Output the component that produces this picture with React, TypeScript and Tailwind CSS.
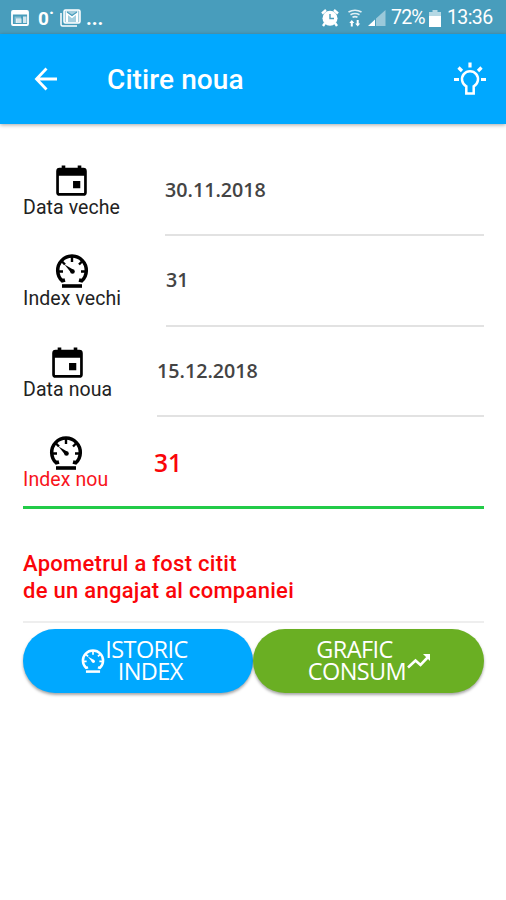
import type { ReactNode } from "react";
import clsx from "clsx";

type IconProps = { className?: string };

function CalendarIcon({ className }: IconProps) {
  return (
    <svg viewBox="0 0 30 30" className={className} fill="none">
      <rect x="1.5" y="4" width="27" height="24.5" rx="2" stroke="currentColor" strokeWidth="2.6" />
      <path d="M1 4h28v6.500H1zM5.500 .5h3.500V5H5.500zM21 .5h3.500V5H21zM16.500 15.500h7v7h-7z" fill="currentColor" />
    </svg>
  );
}

function GaugeIcon({ className }: IconProps) {
  return (
    <svg viewBox="0 0 34 34" className={className} fill="none" stroke="currentColor">
      <path d="M10 26L7.200 26.800A14.300 14.300 0 1 1 26.800 26.800L24 26" strokeWidth="3.500" />
      <path d="M17 3v5M31 17.500h-5M3 17.500h5M7 7.500l3 3M27 7.500l-3 3" strokeWidth="2.400" />
      <path d="M9.500 10.500l9 5.200-2.600 2.800z" fill="currentColor" stroke="none" />
      <circle cx="17.500" cy="17.500" r="2.300" fill="currentColor" stroke="none" />
      <path d="M7 32h20" strokeWidth="3.600" />
    </svg>
  );
}

function BulbIcon() {
  return (
    <svg viewBox="0 0 34 34" className="h-[34px] w-[34px]" fill="none" stroke="currentColor" strokeWidth="2.5">
      <path d="M13.300 31.500v-7.200a8 8 0 1 1 7.400 0v7.200z" />
      <path d="M17 .5v5M1 17.500h5M28 17.500h5M5.500 5.500l3.500 3.500M28.500 5.500L25 9" strokeWidth="3.200" />
    </svg>
  );
}

function StatusBar() {
  return (
    <div className="flex h-[34px] items-center bg-[#489dbc] pt-[2px] pr-[12px] pl-[11px] font-[Roboto] text-white">
      <svg viewBox="0 0 18 16" className="h-4 w-[18px]" fill="none">
        <rect x="1" y="1" width="16" height="14" rx="1" stroke="currentColor" strokeWidth="1.800" />
        <path d="M1 1h16v3.500H1z" fill="currentColor" />
        <path d="M3.500 6.500H10V9H6v4H3.500z" fill="currentColor" opacity=".35" />
        <path d="M5 8.500h5.500V13H5zM12 6.500h3.500V13H12z" fill="currentColor" opacity=".75" />
      </svg>
      <span className="ml-[9px] w-[17px] text-[19px] leading-none font-bold">0˙</span>
      <svg viewBox="0 0 21 18" className="ml-[5px] h-[18px] w-[21px]" fill="none" stroke="currentColor">
        <path d="M1 4v11.500q0 1.500 1.500 1.500H17" strokeWidth="1.500" />
        <rect x="4" y="1" width="16" height="13" rx="1.500" fill="currentColor" fillOpacity=".5" strokeWidth="1.500" />
        <path d="M7 13V4l5 4 5-4v9" strokeWidth="2" />
        <path d="M7 3l5 3.500L17 3" stroke="#489dbc" strokeWidth="1.200" />
      </svg>
      <span className="ml-[5px] text-[20px] leading-none font-bold">...</span>

      <svg viewBox="0 0 18 18" className="ml-auto h-[18px] w-[18px]" fill="none">
        <circle cx="9" cy="9.300" r="7.500" fill="currentColor" />
        <path d="M1 4.500l4-3.500M17 4.500l-4-3.500M4 14l-2 3M14 14l2 3" stroke="currentColor" strokeWidth="2.400" />
        <path d="M9 5V9.500h4" stroke="#489dbc" strokeWidth="1.400" />
      </svg>
      <svg viewBox="0 0 14 18" className="ml-[9px] h-[18px] w-[14px]" fill="none" stroke="currentColor">
        <path d="M.5 3q6.500-3.500 13 0M2.500 5.800q4.500-2.600 9 0M4.500 8.300q2.500-1.300 5 0" strokeWidth="1.600" opacity=".85" />
        <path d="M3.800 17.500v-5M9.700 11v5" strokeWidth="2" />
        <path d="M1.300 14l2.500-3 2.500 3zM7.200 14.500l2.500 3 2.500-3z" fill="currentColor" stroke="none" />
      </svg>
      <svg viewBox="0 0 18 18" className="ml-[6px] h-[18px] w-[18px]" fill="currentColor">
        <path d="M0 17h7V10.500z" />
        <path d="M8 17V9.500L17.500 1v16z" opacity=".45" />
      </svg>
      <span className="ml-[5px] w-[35px] text-[19.500px] leading-none tracking-[-0.800px]">72%</span>
      <svg viewBox="0 0 12 17" className="ml-[3px] h-[17px] w-3" fill="currentColor">
        <path d="M3.500 0h5v2h-5z" opacity=".6" />
        <path d="M0 2h12v4H0z" opacity=".6" />
        <path d="M0 6h12v11H0z" />
      </svg>
      <span className="ml-[6px] w-[47px] text-[19.500px] leading-none tracking-[-0.600px]">13:36</span>
    </div>
  );
}

type ReadingRowProps = {
  icon: ReactNode;
  label: string;
  value: string;
  labelWidth: string;
  active?: boolean;
};

function ReadingRow({ icon, label, value, labelWidth, active }: ReadingRowProps) {
  return (
    <li className={clsx("flex", active ? "h-[91.750px] border-b-[3px] border-[#22cb48]" : "h-[90.750px]")}>
      <div className={clsx("flex shrink-0", labelWidth)}>
        <div
          className={clsx(
            "flex h-full flex-col items-center pt-[18px] font-[Roboto] text-[19.500px]",
            active ? "text-[#f8141c]" : "text-[#222]",
          )}
        >
          <span className="flex h-[35px] items-center text-black">{icon}</span>
          <span className="leading-[20px] tracking-[0.080px] whitespace-nowrap">{label}</span>
        </div>
      </div>
      <div
        className={clsx(
          "flex flex-1 items-center font-['Open_Sans'] font-semibold",
          active ? "pt-[3px] pl-px text-[24.500px] text-[#fa0509]" : "border-b-2 border-[#e2e2e2] text-[19.700px] text-[#444]",
        )}
      >
        {value}
      </div>
    </li>
  );
}

export default function App() {
  return (
    <div className="h-[900px] w-[506px] overflow-hidden bg-white">
      <StatusBar />
      <header className="flex h-[90px] items-center bg-[#00a8ff] pr-[19px] pl-[34px] font-[Roboto] text-white shadow-[0_1px_4px_rgba(0,0,0,0.35)]">
        <svg viewBox="0 0 24 24" className="h-6 w-6" fill="none" stroke="currentColor" strokeWidth="2.8">
          <path d="M12.500 1.500L2.500 12l10 10.500M2.500 12H23" />
        </svg>
        <h1 className="ml-[49px] pt-px text-[28px] font-medium tracking-[0.100px]">Citire noua</h1>
        <span className="ml-auto">
          <BulbIcon />
        </span>
      </header>

      <main className="pt-[21px] pr-[22px] pl-[23px]">
        <ul>
          <ReadingRow icon={<CalendarIcon className="h-[31px] w-[31px]" />} label="Data veche" value="30.11.2018" labelWidth="w-[142px]" />
          <ReadingRow icon={<GaugeIcon className="h-[34px] w-[34px]" />} label="Index vechi" value="31" labelWidth="w-[143px]" />
          <ReadingRow icon={<CalendarIcon className="h-[31px] w-[31px]" />} label="Data noua" value="15.12.2018" labelWidth="w-[134px]" />
          <ReadingRow icon={<GaugeIcon className="h-[34px] w-[34px]" />} label="Index nou" value="31" labelWidth="w-[130px]" active />
        </ul>

        <p className="mt-[41px] h-[73px] border-b-2 border-[#eeeeee] font-[Roboto] text-[22px] leading-[27px] font-medium tracking-[0.280px] text-[#fa0509]">
          Apometrul a fost citit
          <br />
          de un angajat al companiei
        </p>

        <div className="mt-[6px] flex font-['Open_Sans'] text-[23.500px] leading-[22px] tracking-[-0.600px] text-white">
          <button className="flex h-16 w-[230px] items-center justify-center rounded-full bg-[#00a8ff] pr-[7px] pb-[2px] shadow-[0_2px_3px_rgba(0,0,0,0.35)]">
            <GaugeIcon className="mt-[2px] h-6 w-6" />
            <span className="text-right">
              <span className="block">ISTORIC</span>
              <span className="block pr-[5px]">INDEX</span>
            </span>
          </button>
          <button className="flex h-16 flex-1 items-center justify-center rounded-full bg-[#6aaf23] pb-[2px] pl-[2px] shadow-[0_2px_3px_rgba(0,0,0,0.35)]">
            <span className="text-center">
              <span className="block pr-[5px]">GRAFIC</span>
              <span className="block">CONSUM</span>
            </span>
            <svg viewBox="0 0 24 16" className="mt-[2px] ml-px h-4 w-6" fill="none" stroke="currentColor" strokeWidth="2.600">
              <path d="M1 14.500l7.500-7 5 4.500L22 3" />
              <path d="M16 1h7v7z" fill="currentColor" stroke="none" />
            </svg>
          </button>
        </div>
      </main>
    </div>
  );
}
